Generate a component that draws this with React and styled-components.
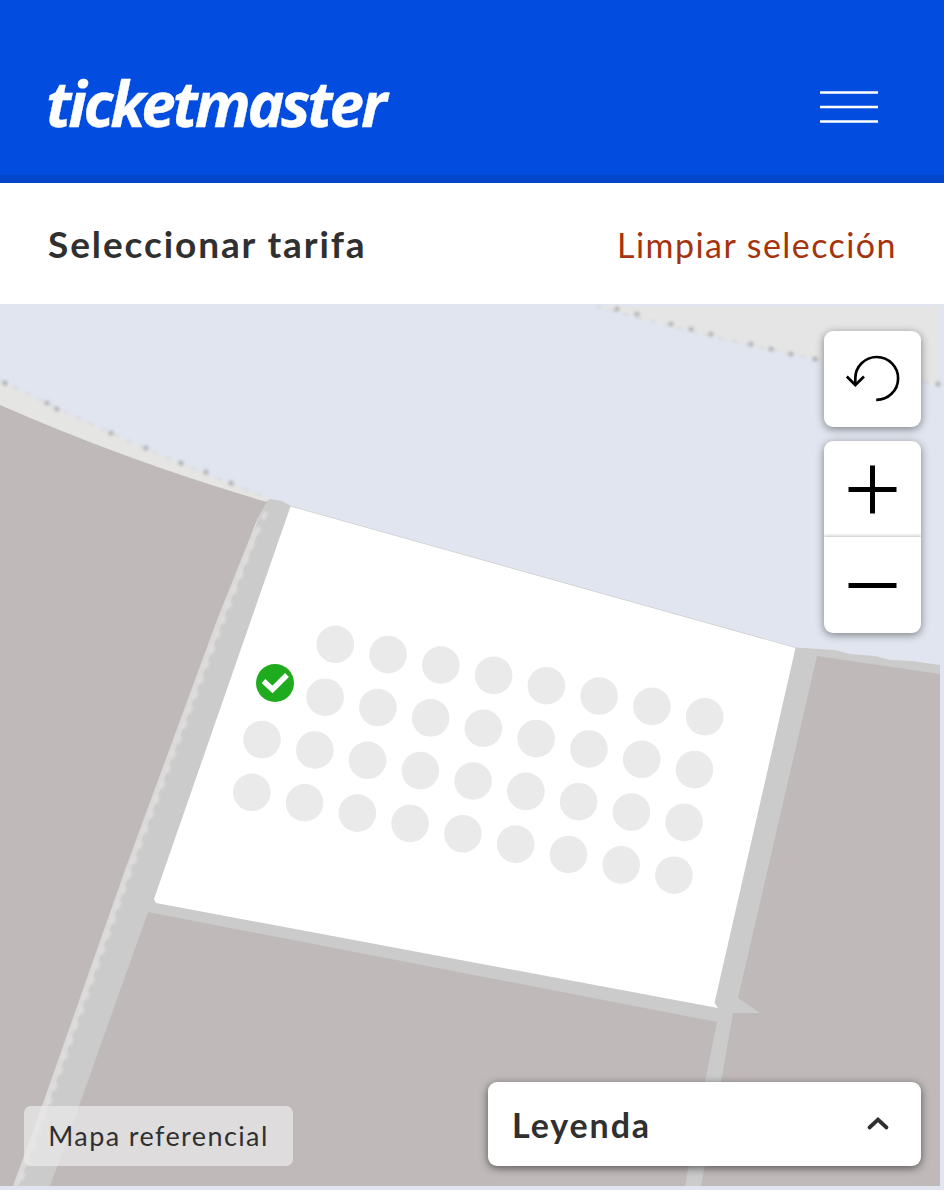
import { useState } from "react";
import styled, { createGlobalStyle } from "styled-components";

const SEAT_ROWS = [
  { id: "A", x: 335.3, y: 644.3, count: 8 },
  { id: "B", x: 325.1, y: 697.2, count: 8 },
  { id: "C", x: 262, y: 739.6, count: 9 },
  { id: "D", x: 251.8, y: 792.4, count: 9 }
];

const SEAT_STEP = { x: 52.77, y: 10.35 };

const NORTH_DOTS = [[617, 309], [637, 314], [671, 324], [691, 329], [711, 334], [751, 344], [771, 349], [791, 354], [815, 359], [938, 384]];
const WEST_DOTS = [[5, 383], [47, 403], [57, 409], [111, 433], [146, 448], [181, 463], [206, 472], [231, 483]];

const SeatMap = () => (
  <MapDrawing viewBox="0 304 944 886">
    <defs>
      <filter id="soft" x="-10%" y="-10%" width="120%" height="120%">
        <feGaussianBlur stdDeviation="1.4" />
      </filter>
    </defs>

    {/* outer terraces */}
    <path d="M596 306 Q706 337 825 361 L940 385 V306 Z" fill="#e5e5e5" />
    <path d="M0 380 Q130 446 268 498 L292 507 L268 516 L0 420 Z" fill="#e5e5e4" />
    <g fill="none" stroke="#d6d8db" strokeWidth="2" strokeDasharray="6 8" filter="url(#soft)">
      <path d="M596 306 Q706 337 825 361 L940 385" />
      <path d="M0 380 Q130 446 268 498" />
    </g>

    {/* aisles */}
    <path d="M264 503 L270 499 L282 501 L291 506 L796 647.500 L835 650 L850 654 L875 656 L890 660 L912 661 L940 665 V1186 H13 Z" fill="#cbcbcb" />
    <path d="M255 531 L219 621 L127 870 L44 1106 L15 1186" fill="none" stroke="#dad9d8" strokeWidth="7" />
    <path d="M266 512 L257 531 L222 622 L130 871 L47 1107 L18 1187" fill="none" stroke="#dfdddd" strokeWidth="5" strokeDasharray="8 8" filter="url(#soft)" />

    {/* closed blocks */}
    <g fill="#bfb9b9">
      <path d="M0 405 Q130 462 267 502 Q258 516 253 530 L217 620 L125 870 L42 1106 L13 1186 H0 Z" />
      <path d="M148 912 L717 1022 L705 1082 L685 1186 H50 L79 1106 Z" />
      <path d="M817 656 L940 674 V1186 H701 L721 1082 L733 1013 H760 L738 998 Z" />
    </g>

    {/* open block */}
    <path d="M290.500 506.500 L795.500 648 L714.500 1003 L718 1008 L156 903 L154 899 Z" fill="#fff" />

    <g fill="#b4b6b7" filter="url(#soft)">
      {[...NORTH_DOTS, ...WEST_DOTS].map(([x, y]) => (
        <circle key={`${x}-${y}`} cx={x} cy={y} r="2.6" />
      ))}
    </g>

    {SEAT_ROWS.map((row) =>
      Array.from({ length: row.count }, (_, i) => (
        <circle
          key={row.id + i}
          cx={row.x + i * SEAT_STEP.x}
          cy={row.y + i * SEAT_STEP.y}
          r="18.8"
          fill="#eaeaea"
        />
      ))
    )}

    <circle cx="275" cy="683" r="19" fill="#1eac1e" />
    <path d="M263.500 681 L272.500 689.500 L287 675" fill="none" stroke="#fff" strokeWidth="5.500" />
  </MapDrawing>
);

const App = () => {
  const [legendOpen, setLegendOpen] = useState(false);

  return (
    <>
      <GlobalStyle />
      <Page>
        <Header>
          <Logo>ticketmaster</Logo>
          <MenuButton aria-label="Menú" viewBox="0 0 58 32">
            <path d="M0 1.500 H58 M0 16 H58 M0 30.500 H58" />
          </MenuButton>
        </Header>
        <TitleBar>
          <Title>Seleccionar tarifa</Title>
          <ClearButton>Limpiar selección</ClearButton>
        </TitleBar>
        <MapArea>
          <SeatMap />
          <Controls>
            <ControlGroup>
              <ControlButton aria-label="Restablecer">
                <svg width="97" height="96" viewBox="0 0 97 96" fill="none" stroke="#000" strokeWidth="2.700">
                  <path d="M52.200 68.800 A21.400 21.400 0 1 0 31.300 47.500 V54" />
                  <path d="M22.800 45.500 L31.300 54 L40 45.500" />
                </svg>
              </ControlButton>
            </ControlGroup>
            <ControlGroup>
              <ControlButton aria-label="Acercar">
                <svg width="97" height="96" viewBox="0 0 97 96" stroke="#000" strokeWidth="5">
                  <path d="M24.500 48.500 H72.500 M48.500 24.500 V72.500" />
                </svg>
              </ControlButton>
              <ControlButton aria-label="Alejar">
                <svg width="97" height="96" viewBox="0 0 97 96" stroke="#000" strokeWidth="5">
                  <path d="M24.500 48.500 H72.500" />
                </svg>
              </ControlButton>
            </ControlGroup>
          </Controls>
          <MapNote>Mapa referencial</MapNote>
          <Legend onClick={() => setLegendOpen(!legendOpen)} aria-expanded={legendOpen}>
            <span>Leyenda</span>
            <Chevron $open={legendOpen} viewBox="0 0 26 17">
              <path d="M4.500 12.500 L13 4.500 L21.500 12.500" />
            </Chevron>
          </Legend>
        </MapArea>
      </Page>
    </>
  );
};

export default App;


const GlobalStyle = createGlobalStyle`
  * {
    box-sizing: border-box;
  }

  body {
    margin: 0;
    background-color: #fff;
    font-family: Lato, "Liberation Sans", sans-serif;
    color: #303030;
  }

  button {
    padding: 0;
    border: 0;
    background: none;
    font-family: inherit;
    color: inherit;
    cursor: pointer;
  }
`;

const Page = styled.div`
  width: 100%;
  min-height: 1200px;
  display: flex;
  flex-flow: column nowrap;
`;

const Header = styled.header`
  height: 183px;
  padding: 30px 66px 0 46px;
  display: flex;
  justify-content: space-between;
  align-items: center;
  border-bottom: 8px solid #0145cb;
  background-color: #024ddf;
`;

const Logo = styled.div`
  font-family: "Noto Sans", "Open Sans", sans-serif;
  font-size: 62px;
  font-weight: 700;
  font-style: italic;
  line-height: 80px;
  letter-spacing: -3.2px;
  color: #fff;
  -webkit-text-stroke: 0.3px #fff;
`;

const MenuButton = styled.svg`
  width: 58px;
  height: 32px;
  margin-top: 9px;
  stroke: #fff;
  stroke-width: 2.4;
  cursor: pointer;
`;

const TitleBar = styled.div`
  height: 121px;
  padding: 0 47px 0 48px;
  display: flex;
  justify-content: space-between;
  align-items: center;
`;

const Title = styled.h1`
  margin: 0;
  font-size: 37px;
  font-weight: 700;
  letter-spacing: 1.9px;
`;

const ClearButton = styled.button`
  && {
    margin-top: 2px;
    font-size: 34px;
    letter-spacing: 1.45px;
    color: #a5340e;
  }
`;

const MapArea = styled.main`
  height: 886px;
  position: relative;
  background-color: #e0e5ef;
`;

const MapDrawing = styled.svg`
  width: 100%;
  height: 100%;
  display: block;
`;

const Controls = styled.div`
  position: absolute;
  top: 27px;
  right: 23px;
  display: flex;
  flex-flow: column nowrap;
  gap: 14px;
`;

const ControlGroup = styled.div`
  width: 97px;
  display: flex;
  flex-flow: column nowrap;
  border-radius: 9px;
  background-color: #fff;
  box-shadow: 0 2px 8px rgba(0, 0, 0, 0.45);
`;

const ControlButton = styled.button`
  height: 96px;

  svg {
    display: block;
  }

  & + & {
    box-shadow: 0 -1px 3px rgba(0, 0, 0, 0.25);
    clip-path: inset(-4px 0 0 0);
  }
`;

const MapNote = styled.div`
  width: 269px;
  height: 60px;
  padding-bottom: 2px;
  position: absolute;
  left: 24px;
  bottom: 24px;
  display: flex;
  justify-content: center;
  align-items: center;
  border-radius: 7px;
  background-color: rgba(234, 232, 233, 0.75);
  font-size: 27px;
  letter-spacing: 1.4px;
`;

const Legend = styled.button`
  && {
    width: 433px;
    height: 84px;
    padding: 0 30px 0 24px;
    position: absolute;
    right: 23px;
    bottom: 24px;
    display: flex;
    justify-content: space-between;
    align-items: center;
    border-radius: 9px;
    background-color: #fff;
    box-shadow: 0 2px 8px rgba(0, 0, 0, 0.55);
    font-size: 34px;
    font-weight: 700;
    letter-spacing: 1.9px;
  }
`;

const Chevron = styled.svg`
  width: 26px;
  height: 17px;
  margin-bottom: 1px;
  fill: none;
  stroke: #303030;
  stroke-width: 3.8;
  stroke-linecap: round;
  transform: ${(props) => (props.$open ? "rotate(180deg)" : "none")};
`;
